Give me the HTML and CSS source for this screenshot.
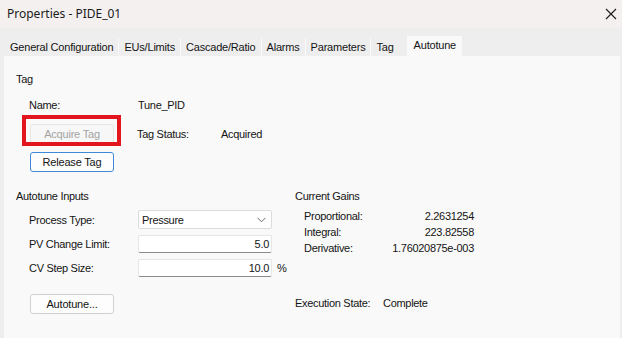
FILE: index.html
```html
<!DOCTYPE html>
<html>
<head>
<meta charset="utf-8">
<link rel="stylesheet" href="styles.css">
</head>
<body>
<div class="titlebar">
  <span class="title">Properties - PIDE_01</span>
  <svg class="close" width="12" height="12" viewBox="0 0 12 12"><path d="M1 1 L11 11 M11 1 L1 11" stroke="#1b1b1b" stroke-width="1.1" fill="none"/></svg>
</div>
<div class="tabs">
  <div class="tab">General Configuration</div>
  <div class="tab">EUs/Limits</div>
  <div class="tab">Cascade/Ratio</div>
  <div class="tab">Alarms</div>
  <div class="tab">Parameters</div>
  <div class="tab last">Tag</div>
  <div class="tab active">Autotune</div>
</div>
<div class="panel">
  <section class="tag-group">
    <div class="group-title">Tag</div>
    <div class="row name-row">
      <span class="lbl">Name:</span>
      <span>Tune_PID</span>
    </div>
    <div class="row acq-row">
      <div class="btn-wrap">
        <button class="btn" disabled>Acquire Tag</button>
        <span class="highlight"></span>
      </div>
      <span class="status-lbl">Tag Status:</span>
      <span>Acquired</span>
    </div>
    <div class="row rel-row">
      <button class="btn focus">Release Tag</button>
    </div>
  </section>
  <div class="cols">
    <section class="inputs">
      <div class="group-title">Autotune Inputs</div>
      <div class="row field-row first">
        <span class="lbl">Process Type:</span>
        <div class="select"><span>Pressure</span>
          <svg class="chev" width="9" height="6" viewBox="0 0 9 6"><path d="M0.5 0.8 L4.5 4.8 L8.5 0.8" stroke="#6e6e6e" stroke-width="1" fill="none"/></svg>
        </div>
      </div>
      <div class="row field-row">
        <span class="lbl">PV Change Limit:</span>
        <div class="input">5.0</div>
      </div>
      <div class="row field-row">
        <span class="lbl">CV Step Size:</span>
        <div class="input">10.0</div>
        <span class="unit">%</span>
      </div>
      <div class="row auto-row">
        <button class="btn">Autotune...</button>
      </div>
    </section>
    <section class="gains">
      <div class="group-title">Current Gains</div>
      <div class="gain-list">
        <span>Proportional:</span><span class="val">2.2631254</span>
        <span>Integral:</span><span class="val">223.82558</span>
        <span>Derivative:</span><span class="val">1.76020875e-003</span>
      </div>
      <div class="exec">
        <span class="exec-lbl">Execution State:</span>
        <span>Complete</span>
      </div>
    </section>
  </div>
</div>
</body>
</html>
```
FILE: styles.css
```css
* { box-sizing: border-box; }
html, body { margin: 0; padding: 0; }
body {
  width: 622px;
  height: 338px;
  overflow: hidden;
  background: #eeeeee;
  font-family: "Liberation Sans", Arial, sans-serif;
  font-size: 11px;
  letter-spacing: -0.3px;
  line-height: 14px;
  color: #141414;
  display: flex;
  flex-direction: column;
}
.titlebar {
  height: 28px;
  flex: none;
  background: #f4f0f0;
  display: flex;
  align-items: center;
  justify-content: space-between;
  padding: 0 4px 0 7px;
}
.title {
  font-family: "Noto Sans", sans-serif;
  font-size: 12px;
  letter-spacing: 0;
  color: #1b1b1b;
}
.close { display: block; margin-right: 1px; }
.tabs {
  height: 28px;
  flex: none;
  display: flex;
  align-items: flex-end;
  padding-left: 5px;
  letter-spacing: -0.2px;
}
.tab {
  height: 18px;
  padding: 0 5px;
  display: flex;
  align-items: center;
  border-right: 1px solid #fafafa;
  white-space: nowrap;
}
.tab.last { border-right: none; padding-right: 13px; }
.tab.active {
  height: 20px;
  background: #f9f9f9;
  padding: 0 6px 3px 7px;
  border-right: none;
}
.panel {
  flex: 1;
  margin: 0 2px 0 4px;
  background: #f9f9f9;
  padding: 16px 12px 0 12px;
}
.group-title { height: 14px; }
.row { display: flex; align-items: center; padding-left: 13px; }
.lbl { width: 109px; flex: none; }
.name-row { margin-top: 12px; }
.acq-row { margin-top: 12px; }
.btn-wrap { position: relative; width: 84px; height: 20px; margin-left: 1px; }
.btn {
  width: 84px;
  height: 20px;
  padding: 0;
  background: #fdfdfd;
  border: 1px solid #d0d0d0;
  border-radius: 3px;
  font-family: inherit;
  font-size: 11px;
  letter-spacing: -0.2px;
  color: #141414;
}
.btn[disabled] { color: #a3a3a3; border-color: #e6e6e6; background: #f7f7f7; }
.btn.focus { border-color: #3f8ad6; }
.highlight {
  position: absolute;
  left: -8px;
  top: -9px;
  width: 99px;
  height: 31px;
  border: 4px solid #e3161f;
}
.status-lbl { margin-left: 23px; width: 84px; }
.rel-row { margin-top: 8px; padding-left: 14px; }
.cols { display: flex; margin-top: 17px; }
.inputs { width: 279px; flex: none; }
.field-row { margin-top: 6px; }
.field-row.first { margin-top: 7px; }
.select {
  width: 134px;
  height: 19px;
  background: #ffffff;
  border: 1px solid #dcdcdc;
  border-radius: 2px;
  display: flex;
  align-items: center;
  justify-content: space-between;
  padding: 0 5px 0 3px;
}
.chev { display: block; }
.input {
  width: 134px;
  height: 18px;
  background: #ffffff;
  border: 1px solid #e6e6e6;
  border-bottom-color: #8c8c8c;
  border-radius: 2px;
  text-align: right;
  padding: 1px 2px 0 0;
}
.unit { margin-left: 5px; }
.auto-row { margin-top: 17px; padding-left: 14px; }
.gains { flex: none; }
.gain-list {
  display: grid;
  width: 170px;
  grid-template-columns: auto auto;
  justify-content: space-between;
  grid-auto-rows: 16px;
  align-items: center;
  margin: 5px 0 0 9px;
  white-space: nowrap;
}
.val { text-align: right; }
.exec { display: flex; margin-top: 40px; }
.exec-lbl { width: 88px; }
```
